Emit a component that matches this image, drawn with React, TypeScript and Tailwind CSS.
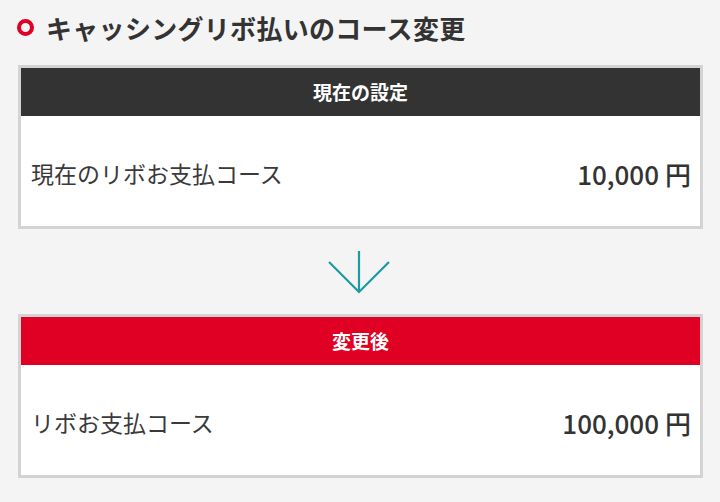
export default function App() {
  return (
    <div
      className="h-[502px] w-full bg-[#f4f4f4] pl-[18px] pr-[17px] text-[#333]"
      style={{ fontFamily: '"Noto Sans CJK JP", "Noto Sans", sans-serif' }}
    >
      <div className="mb-[11px] flex h-[54px] items-center gap-[12px] pt-[1px]">
        <span className="-ml-[1px] block h-[17px] w-[17px] rounded-full border-[4px] border-[#e00024]" />
        <h1 className="text-[26px] font-bold leading-none tracking-[0.3px] text-[#333]">
          キャッシングリボ払いのコース変更
        </h1>
      </div>

      <CourseCard title="現在の設定" header="bg-[#333333]" label="現在のリボお支払コース" amount="10,000" />

      <div className="flex h-[85px] items-center justify-center pr-[3px]">
        <svg width="62" height="44" viewBox="0 0 62 44" fill="none" stroke="#1b9ba2" strokeWidth="2.2">
          <path d="M31 1V42" />
          <path d="M1 12L31 42L61 12" />
        </svg>
      </div>

      <CourseCard title="変更後" header="bg-[#e00024]" label="リボお支払コース" amount="100,000" />
    </div>
  )
}

function CourseCard({ title, header, label, amount }: { title: string; header: string; label: string; amount: string }) {
  return (
    <div className="border-[3px] border-[#d3d3d3] bg-white">
      <div className={`flex h-[48px] items-center justify-center ${header}`}>
        <span className="text-[19px] font-bold text-white">{title}</span>
      </div>
      <div className="flex h-[110px] items-center justify-between pl-[10px] pr-[9px] pt-[5px]">
        <span className="text-[23px] font-normal text-[#3a3a3a]">{label}</span>
        <span className="text-[26px] font-medium text-[#333]">
          {amount}
          <span className="ml-[6px]">円</span>
        </span>
      </div>
    </div>
  )
}
